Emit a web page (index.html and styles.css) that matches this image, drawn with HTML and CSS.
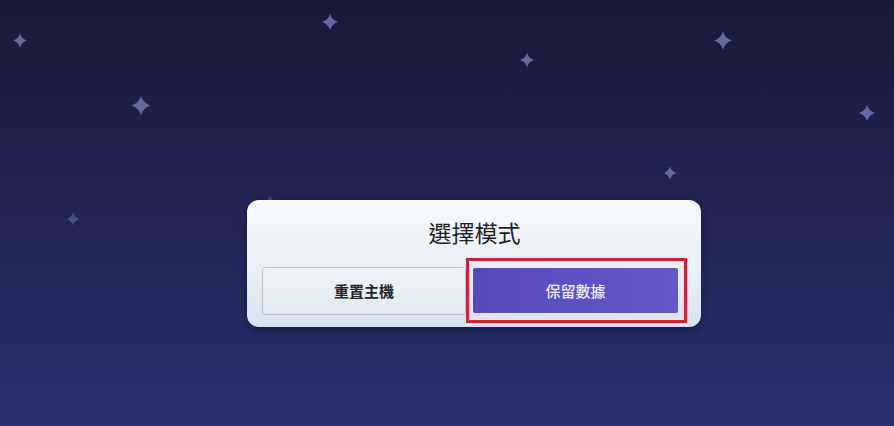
FILE: index.html
```html
<!DOCTYPE html>
<html lang="zh-Hant">

<head>
    <meta charset="UTF-8">
    <meta name="viewport" content="width=device-width, initial-scale=1.0">
    <title>選擇模式</title>
    <link rel="stylesheet" href="styles.css">
</head>

<body>

    <div class="stage">
        <svg class="stars" width="894" height="426" viewBox="0 0 894 426" aria-hidden="true">
            <defs>
                <path id="spark" d="M0 -1 Q0.24 -0.24 1 0 Q0.24 0.24 0 1 Q-0.24 0.24 -1 0 Q-0.24 -0.24 0 -1Z" />
            </defs>
            <use href="#spark" transform="translate(20 40.5) scale(7)" />
            <use href="#spark" transform="translate(141 105.5) scale(9.5)" />
            <use href="#spark" transform="translate(330 22) scale(8)" />
            <use href="#spark" transform="translate(527 60) scale(7)" />
            <use href="#spark" transform="translate(723 40.5) scale(9)" />
            <use href="#spark" transform="translate(867 113) scale(8)" />
            <use href="#spark" transform="translate(670 173) scale(6.5)" />
            <use class="dim" href="#spark" transform="translate(73 219) scale(6.5)" />
            <use class="dim" href="#spark" transform="translate(270 199) scale(3)" />
        </svg>

        <div class="dialog">
            <h2 class="dialog-title">選擇模式</h2>
            <div class="choices">
                <button class="choice choice-reset">重置主機</button>
                <div class="highlight">
                    <button class="choice choice-keep">保留數據</button>
                </div>
            </div>
        </div>
    </div>

</body>

</html>
```

FILE: styles.css
```css
* {
    margin: 0;
    padding: 0;
    box-sizing: border-box;
    font-family: "Noto Sans CJK TC", "Noto Sans", sans-serif;
}

html,
body {
    width: 894px;
    height: 426px;
    overflow: hidden;
}

body {
    background: linear-gradient(to bottom, #181a3b 0%, #1f2452 45%, #29306e 100%);
}

.stage {
    position: relative;
    width: 894px;
    height: 426px;
    padding: 200px 0 0 247px;
}

.stars {
    position: absolute;
    left: 0;
    top: 0;
}

.stars use {
    fill: #7880b6;
    opacity: 0.78;
}

.stars use.dim {
    opacity: 0.45;
}

.dialog {
    position: relative;
    width: 454px;
    height: 127px;
    padding: 16px 14px 0 15px;
    border-radius: 12px;
    background: linear-gradient(to bottom, #f7f9fc 0%, #e9eff6 55%, #d6e3ef 100%);
    box-shadow: 0 3px 8px rgba(5, 8, 30, 0.45);
}

.dialog-title {
    height: 32px;
    line-height: 32px;
    text-align: center;
    font-size: 23px;
    font-weight: 400;
    color: #1e1f24;
    margin-bottom: 10px;
}

.choices {
    display: flex;
    align-items: center;
}

.choice {
    border: none;
    font-size: 15px;
    cursor: pointer;
}

.choice-reset {
    width: 204px;
    height: 48px;
    border: 1px solid #b8c3ce;
    border-radius: 3px;
    background: linear-gradient(to bottom, #eef3f8, #e0e9f1);
    color: #24262b;
    font-weight: 700;
}

.highlight {
    width: 221px;
    height: 65px;
    border: 3px solid #d3222e;
    padding: 7px 6px 7px 4px;
}

.choice-keep {
    width: 205px;
    height: 45px;
    border-radius: 2px;
    background: linear-gradient(to right, #5848bd, #6657c8);
    color: #ecebf7;
    font-weight: 500;
}
```
